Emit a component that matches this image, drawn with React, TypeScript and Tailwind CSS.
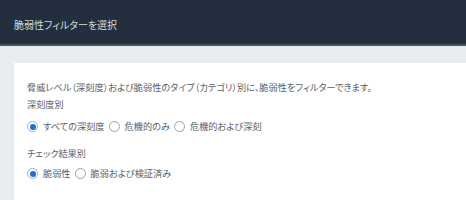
const font = "font-['Noto_Sans_CJK_JP','Noto_Sans',sans-serif] [font-feature-settings:'palt']";

function Radio({ checked, label }: { checked?: boolean; label: string }) {
  return (
    <label className="flex items-center gap-[5px]">
      <span
        className={
          checked
            ? 'flex size-[11px] items-center justify-center rounded-full border border-[#8fb3df] bg-white'
            : 'flex size-[11px] items-center justify-center rounded-full border border-[#9aa1a9] bg-white'
        }
      >
        {checked && <span className="size-[6px] rounded-full bg-[#1f6fd1]" />}
      </span>
      <span>{label}</span>
    </label>
  );
}

export default function App() {
  return (
    <div className={`h-[200px] w-[466px] overflow-hidden bg-[#eaedf0] ${font}`}>
      <header className="flex h-[46px] items-center border-b-2 border-[#4a5461] bg-[#232f3e] px-[14px] pt-1 text-[10px] text-[#d5dbdb]">
        脆弱性フィルターを選択
      </header>
      <div className="mt-[17px] ml-[14px] h-full bg-white px-[13px] pt-4 text-[9.2px] text-[#5a616a]">
        <p className="h-4 leading-4">
          脅威レベル（深刻度）および脆弱性のタイプ（カテゴリ）別に、脆弱性をフィルターできます。
        </p>
        <div className="mt-[1px] h-4 leading-4">深刻度別</div>
        <div className="mt-[5px] flex h-5 items-center gap-[4px]">
          <Radio checked label="すべての深刻度" />
          <Radio label="危機的のみ" />
          <Radio label="危機的および深刻" />
        </div>
        <div className="mt-2 h-4 leading-4">チェック結果別</div>
        <div className="mt-[3px] flex h-5 items-center gap-[4px]">
          <Radio checked label="脆弱性" />
          <Radio label="脆弱および検証済み" />
        </div>
      </div>
    </div>
  );
}
